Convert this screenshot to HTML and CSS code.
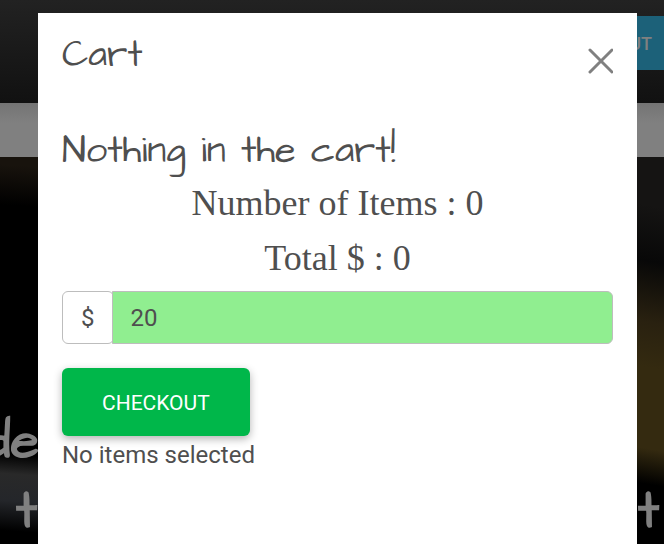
FILE: index.html
```html
<!DOCTYPE html>
<html lang="en">
<head>
<meta charset="utf-8">
<meta name="viewport" content="width=device-width, initial-scale=1">
<title>Cart</title>
<link rel="stylesheet" href="styles.css">
</head>
<body>
<div class="page">
  <header class="topbar"><button class="nav-button" type="button">UT</button></header>
  <div class="band"></div>
  <section class="hero">
    <p class="hero-line hero-first">de</p>
    <p class="hero-line hero-second"><span>t</span><span>t</span></p>
  </section>
</div>
<div class="overlay">
  <main class="modal" role="dialog" aria-labelledby="cart-title">
    <div class="modal-header">
      <h1 class="modal-title" id="cart-title">Cart</h1>
      <button class="close" type="button" aria-label="Close">
        <svg viewBox="0 0 26 26" width="26" height="26" aria-hidden="true"><path d="M3 2L25 24M25 2L3 24"/></svg>
      </button>
    </div>
    <h2 class="empty">Nothing in the cart!</h2>
    <p class="total">Number of Items : 0</p>
    <p class="total">Total $ : 0</p>
    <div class="amount">
      <label class="prefix" for="amount">$</label>
      <input class="amount-input" id="amount" type="text" value="20">
    </div>
    <button class="checkout" type="button">CHECKOUT</button>
    <p class="status">No items selected</p>
  </main>
</div>
</body>
</html>
```
FILE: styles.css
```css
* {
  box-sizing: border-box;
}

body {
  margin: 0;
  color: #4f4f4f;
  background: #000;
  font: 24px/36px Roboto, sans-serif;
  overflow: hidden;
}

h1, h2, p {
  margin: 0;
  font-weight: 400;
}

button {
  border: 0;
  font-family: inherit;
}

.page {
  display: flex;
  flex-direction: column;
  min-height: 100vh;
}

.topbar {
  display: flex;
  justify-content: flex-end;
  padding: 16px 0 33px;
  background: linear-gradient(#222, #111);
}

.nav-button {
  height: 54px;
  padding: 0 12px 0 16px;
  color: #808080;
  background: #1c6179;
  font-size: 18px;
  font-weight: 500;
}

.band {
  height: 54px;
  background: linear-gradient(#747474, #808080 20px);
}

.hero {
  flex: 1;
  padding-top: 250px;
  color: #808080;
  background:
    linear-gradient(184deg, #18130d 10px, #000 50px, #000 298px, #292929 318px, #24262a 345px, #000 375px) left top / 38px 100% no-repeat,
    linear-gradient(190deg, #151413 50px, #080808 105px, #292110 165px, #342a10 210px, #342a10 290px, #000 325px) right top / 27px 100% no-repeat,
    #000;
}

.hero-line {
  font: 700 52px/70px "Architects Daughter", "Open Sans", sans-serif;
}

.hero-first {
  margin-left: -16px;
}

.hero-second {
  display: flex;
  justify-content: space-between;
  padding: 0 5px 0 16px;
}

.overlay {
  position: absolute;
  inset: 0;
  display: flex;
  padding: 13px 27px 0 38px;
}

.modal {
  flex: 1;
  padding: 16px 24px;
  background: #fff;
}

.modal-header {
  display: flex;
  justify-content: space-between;
  align-items: center;
  height: 64px;
}

.modal-title {
  align-self: flex-start;
  font: 400 37px/54px "Architects Daughter", "Open Sans", sans-serif;
}

.close {
  display: flex;
  padding: 0;
  background: none;
}

.close path {
  fill: none;
  stroke: #808080;
  stroke-width: 3;
  stroke-linecap: round;
}

.empty {
  margin-top: 31px;
  font: 400 38px/54px "Architects Daughter", "Open Sans", sans-serif;
}

.total {
  font: 36px/55px "Liberation Serif", serif;
  text-align: center;
}

.empty + .total {
  margin-top: -2px;
}

.amount {
  display: flex;
  height: 53px;
  margin: 5px 0 24px;
}

.prefix {
  display: flex;
  align-items: center;
  padding: 0 18px;
  border: 1px solid #bdbdbd;
  border-radius: 6px;
}

.amount-input {
  flex: 1;
  min-width: 0;
  margin-left: -2px;
  padding: 0 18px;
  color: inherit;
  background: #90ee90;
  border: 1px solid #bdbdbd;
  border-radius: 0 6px 6px 0;
  font: inherit;
}

.checkout {
  display: block;
  height: 68px;
  padding: 2px 40px 0;
  color: #fff;
  background: #00b74a;
  border-radius: 6px;
  box-shadow: 0 3px 8px rgba(0, 0, 0, 0.3);
  font-size: 21px;
}

.status {
  line-height: 38px;
}
```
